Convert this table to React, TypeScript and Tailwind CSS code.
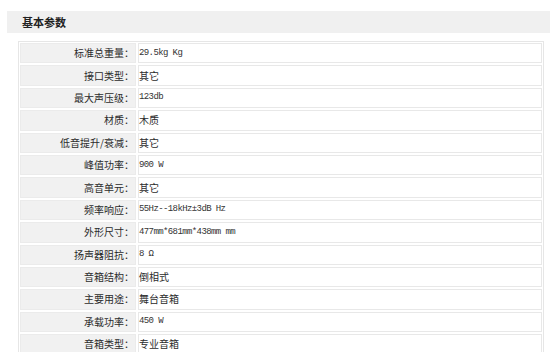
const rows: { label: string; value: string; mono?: boolean }[] = [
  { label: '标准总重量：', value: '29.5kg Kg', mono: true },
  { label: '接口类型：', value: '其它' },
  { label: '最大声压级：', value: '123db', mono: true },
  { label: '材质：', value: '木质' },
  { label: '低音提升/衰减：', value: '其它' },
  { label: '峰值功率：', value: '900 W', mono: true },
  { label: '高音单元：', value: '其它' },
  { label: '频率响应：', value: '55Hz--18kHz±3dB Hz', mono: true },
  { label: '外形尺寸：', value: '477mm*681mm*438mm mm', mono: true },
  { label: '扬声器阻抗：', value: '8 Ω', mono: true },
  { label: '音箱结构：', value: '倒相式' },
  { label: '主要用途：', value: '舞台音箱' },
  { label: '承载功率：', value: '450 W', mono: true },
  { label: '音箱类型：', value: '专业音箱' },
];

export default function App() {
  return (
    <div className="w-[550px] h-[352px] overflow-hidden bg-white text-[#333] font-['Noto_Sans_CJK_SC',sans-serif]">
      {/* section title */}
      <div className="pt-[11px] pl-[7px]">
        <div className="h-[22px] bg-[#f0f0f0] pl-[15px] flex items-center text-[11px] font-bold text-[#222]">
          基本参数
        </div>
      </div>

      {/* parameter table */}
      <div className="mt-[8px] ml-[18px] w-[526px] border border-[#e6e6e6] p-px flex flex-col gap-[2px]">
        {rows.map((row) => (
          <div key={row.label} className="flex gap-[2px] h-[20.4px]">
            <div className="w-[116px] shrink-0 bg-[#f1f1f1] border border-[#ebebeb] flex items-center justify-end pr-[1px] text-[10px] leading-none text-[#2b2b2b]">
              {row.label}
            </div>
            <div className="flex-1 border border-[#e8e8e8] flex items-center">
              {row.mono ? (
                <span className="font-['Liberation_Mono',monospace] text-[9px] tracking-[-0.6px] leading-none">
                  {row.value}
                </span>
              ) : (
                <span className="text-[10px] leading-none text-[#2b2b2b]">{row.value}</span>
              )}
            </div>
          </div>
        ))}
      </div>
    </div>
  );
}
